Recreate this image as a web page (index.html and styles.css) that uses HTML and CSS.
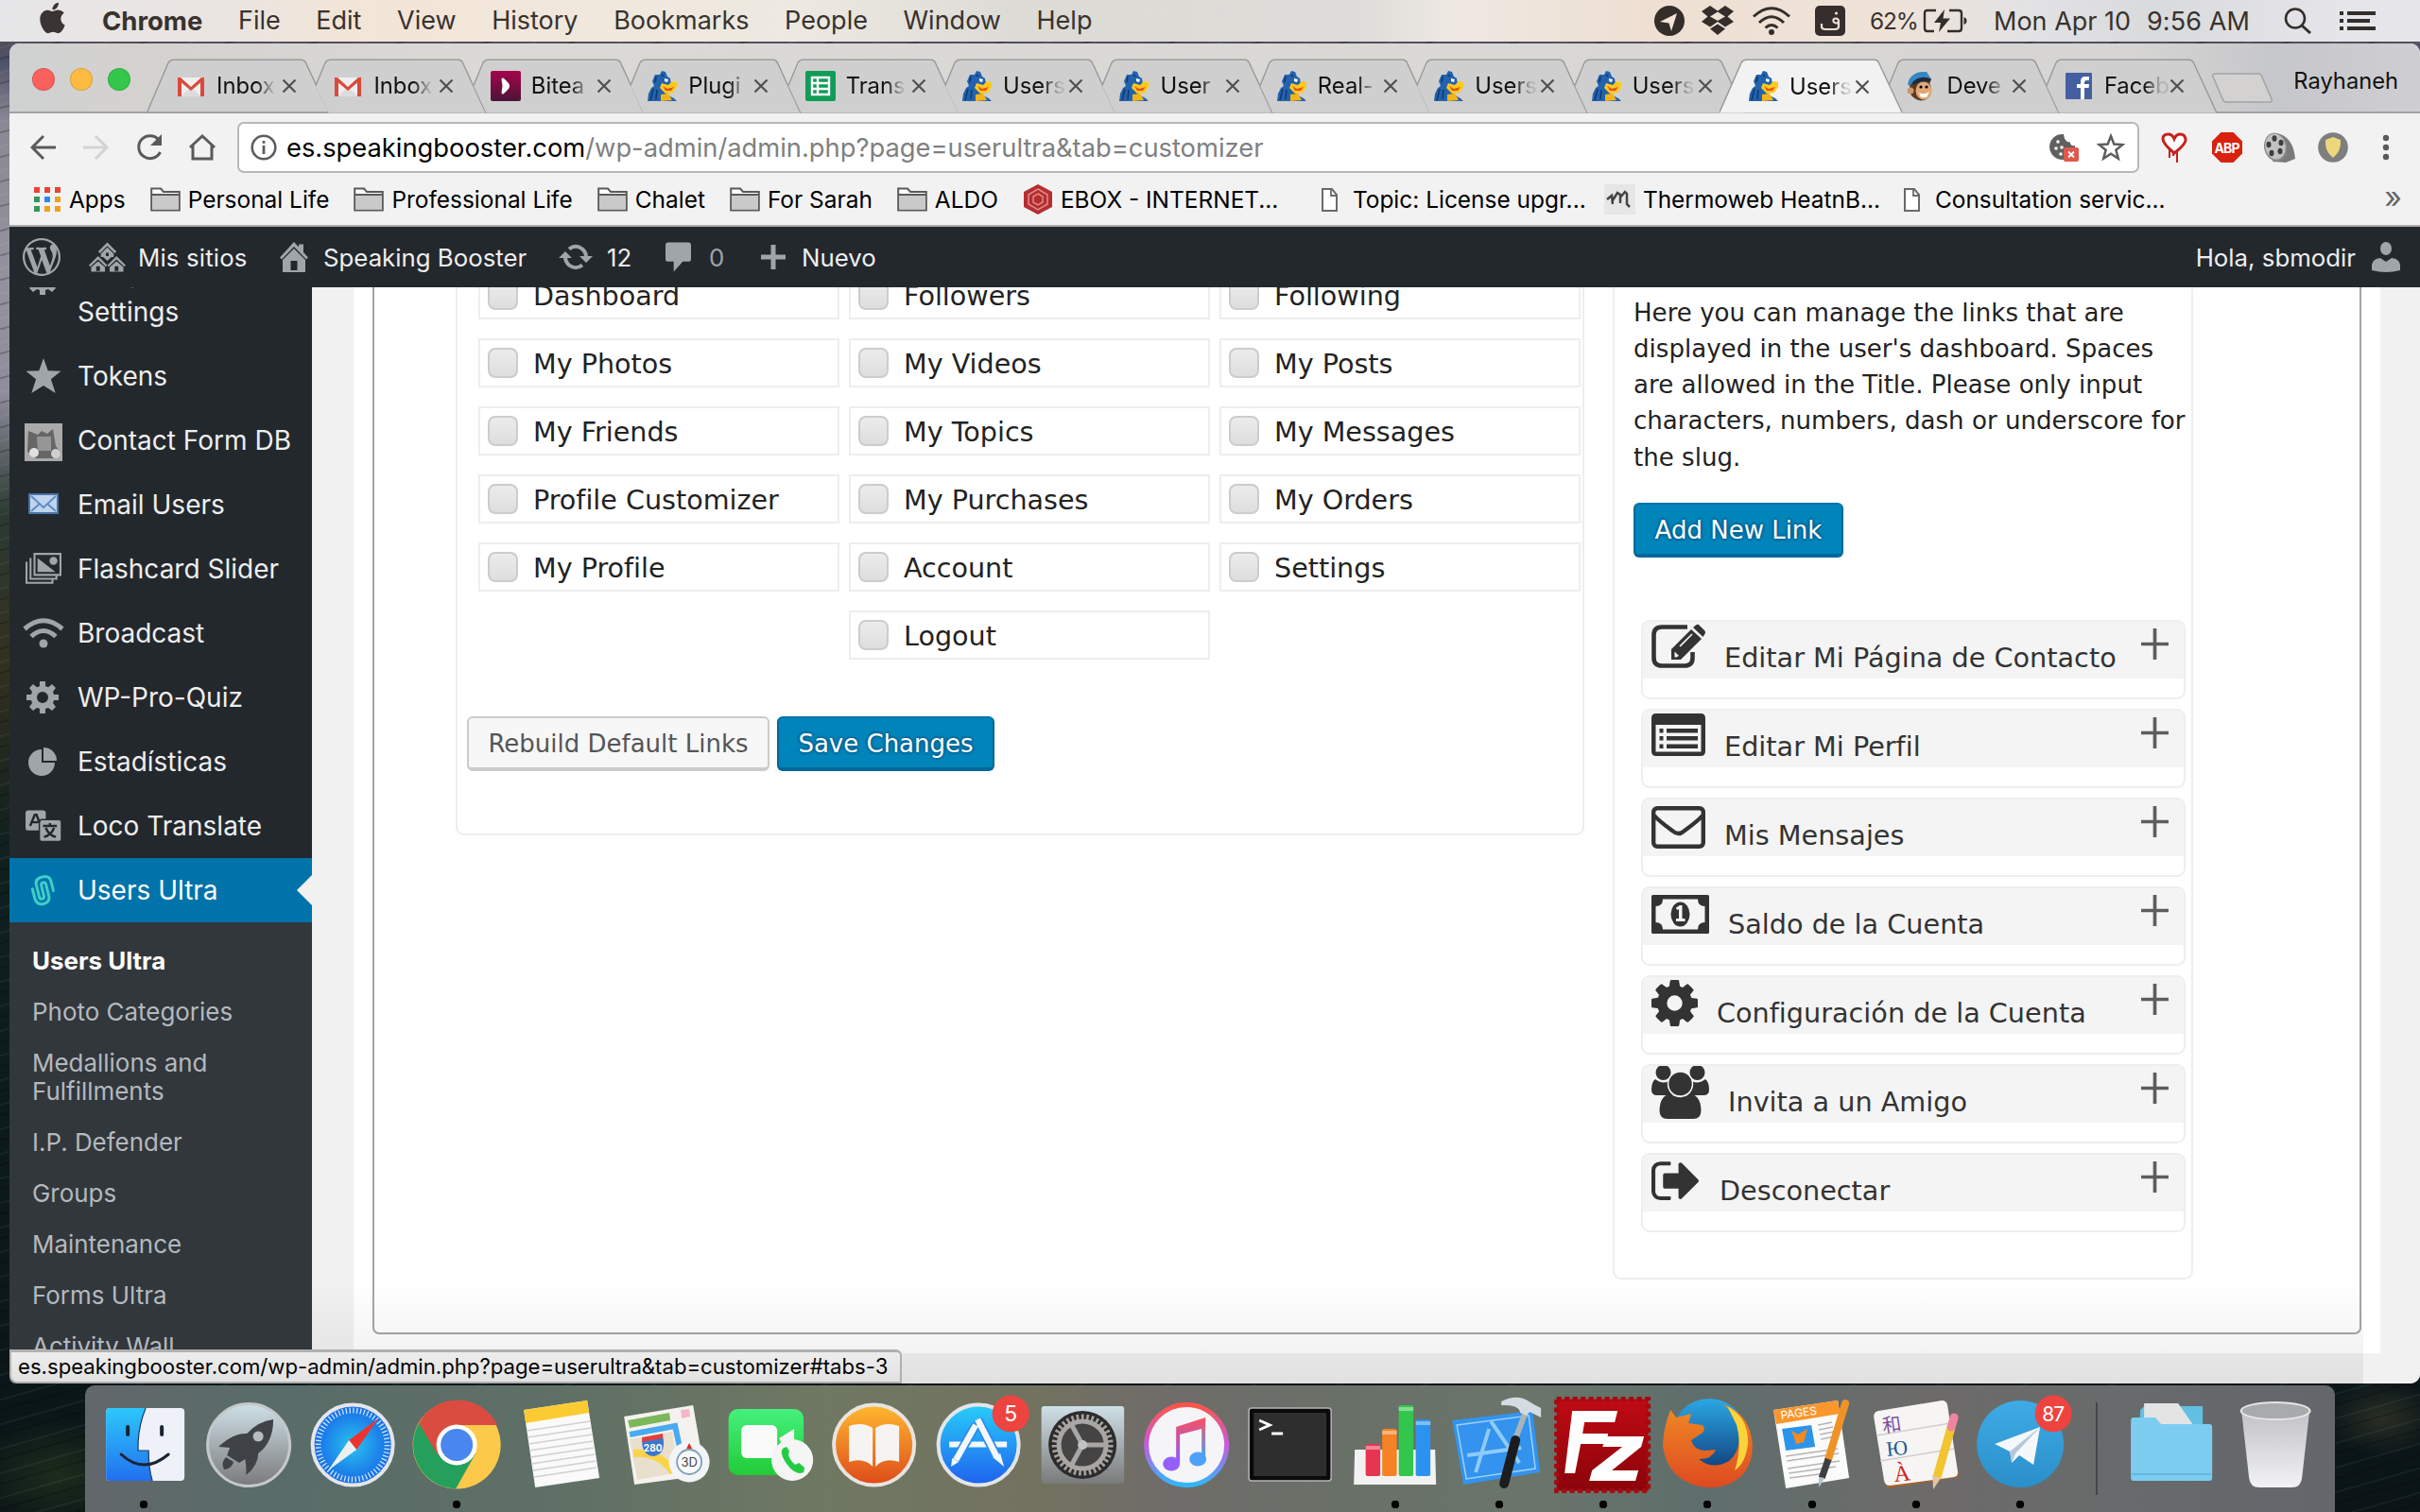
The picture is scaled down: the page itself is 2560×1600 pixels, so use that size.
FILE: index.html
```html
<!DOCTYPE html>
<html lang="es">
<head>
<meta charset="utf-8">
<title>Users Ultra</title>
<link rel="stylesheet" href="styles.css">
</head>
<body>
<svg class="defs" width="0" height="0">
  <defs>
    <linearGradient id="gFinder" x1="0" y1="0" x2="0" y2="1"><stop offset="0" stop-color="#2cc8fb"/><stop offset="1" stop-color="#2270ee"/></linearGradient>
    <linearGradient id="gGrey" x1="0" y1="0" x2="0" y2="1"><stop offset="0" stop-color="#cfe0e8"/><stop offset="1" stop-color="#7a7a7a"/></linearGradient>
    <radialGradient id="gSafari"><stop offset="0" stop-color="#2bc2ee"/><stop offset="1" stop-color="#1668e8"/></radialGradient>
    <linearGradient id="gGreen" x1="0" y1="0" x2="0" y2="1"><stop offset="0" stop-color="#45f07c"/><stop offset="1" stop-color="#20cc36"/></linearGradient>
    <linearGradient id="gBooks" x1="0" y1="0" x2="0" y2="1"><stop offset="0" stop-color="#ffb92f"/><stop offset="1" stop-color="#de4a1a"/></linearGradient>
    <linearGradient id="gStore" x1="0" y1="0" x2="0" y2="1"><stop offset="0" stop-color="#28cdf9"/><stop offset="1" stop-color="#1f62ee"/></linearGradient>
    <linearGradient id="gRing" x1="0" y1="0" x2="0" y2="1"><stop offset="0" stop-color="#ff5548"/><stop offset=".5" stop-color="#c65be0"/><stop offset="1" stop-color="#30b8fb"/></linearGradient>
    <linearGradient id="gNote" x1="0" y1="0" x2="0" y2="1"><stop offset="0" stop-color="#f8525e"/><stop offset="1" stop-color="#8b5cff"/></linearGradient>
    <linearGradient id="gNote2" x1="0" y1="0" x2="0" y2="1"><stop offset="0" stop-color="#f8525e"/><stop offset="1" stop-color="#44a6f8"/></linearGradient>
    <linearGradient id="gFz" x1="0" y1="0" x2="0" y2="1"><stop offset="0" stop-color="#c00a14"/><stop offset="1" stop-color="#8a040a"/></linearGradient>
    <linearGradient id="gFox" x1="0" y1="0" x2="0" y2="1"><stop offset="0" stop-color="#f08a24"/><stop offset="1" stop-color="#dd4a20"/></linearGradient>
    <linearGradient id="gGlobe" x1="0" y1="0" x2="0" y2="1"><stop offset="0" stop-color="#2ba8e4"/><stop offset="1" stop-color="#103a78"/></linearGradient>
    <linearGradient id="gTele" x1="0" y1="0" x2="0" y2="1"><stop offset="0" stop-color="#3eabe6"/><stop offset="1" stop-color="#2a8fc8"/></linearGradient>
    <linearGradient id="gTrash" x1="0" y1="0" x2="0" y2="1"><stop offset="0" stop-color="#c2c2c4"/><stop offset="1" stop-color="#f2f2f4"/></linearGradient>
    <linearGradient id="gBite" x1="0" y1="0" x2="0" y2="1"><stop offset="0" stop-color="#a6054a"/><stop offset="1" stop-color="#4a1438"/></linearGradient>
  </defs>
  <symbol id="tab-first" viewBox="0 0 194 57"><path d="M.5 56.500 L23 4 Q25 .8 28 .8 H164 Q167 .8 168.500 4 L193 56.500Z" fill="#cfcfcf" stroke="#9b9b9b" stroke-width="1.500"/></symbol>
  <symbol id="tab-back" viewBox="0 0 194 57"><path d="M13 28 L26.500 57H193L168 2H26Z" fill="#cfcfcf"/><path d="M13 28 L23 4 Q25 .8 28 .8 H164 Q167 .8 168.500 4 L193 57" fill="none" stroke="#9b9b9b" stroke-width="1.500"/></symbol>
  <symbol id="tab-front" viewBox="0 0 194 57"><path d="M0 57 L23 4 Q25 .8 28 .8 H164 Q167 .8 168.500 4 L193 57Z" fill="#f2f2f2"/><path d="M0 56.200 L23 4 Q25 .8 28 .8 H164 Q167 .8 168.500 4 L193 56.200" fill="none" stroke="#9b9b9b" stroke-width="1.500"/></symbol>
  <symbol id="x" viewBox="0 0 16 16"><path d="M1.500 1.500 14.500 14.500M14.500 1.500 1.500 14.500" stroke="#505050" stroke-width="2.200"/></symbol>
  <symbol id="gmail" viewBox="0 0 32 32"><path d="M2 7H30V27H2Z" fill="#efefef"/><path d="M5 27 16 17 27 27Z" fill="#dcdcdc"/><path d="M2 7H5L16 17 27 7H30V27H26V12.500L16 21 6 12.500V27H2Z" fill="#d94a3d"/></symbol>
  <symbol id="gator" viewBox="0 0 32 32"><path d="M0 32 1 24 4 18 7 16 5 11 8 4 13 4 15 0 19 1 21 6 24 8 25 14 22 17 20 25 28 29 31 32Z" fill="#2262ae"/><path d="M6 19 3 31M9 6 8 12M15 4 17 6M10 20 9 30" stroke="#123a70" stroke-width="1.600"/><path d="M15 13 22 15 26 11 31 12 31 17 27 23 19 24 13 18Z" fill="#ffc91a"/><path d="M14 25 22 24 26 31 14 32Z" fill="#f5b415"/><path d="M16 16 21 19 28 17 25 21 19 21Z" fill="#e2551c"/><path d="M18 8 22 9 21 12 18 11Z" fill="#fff"/></symbol>
  <symbol id="folder" viewBox="0 0 32 26"><path d="M1.200 24.500V1.500H11L14 5H30.800V24.500Z" fill="#fff" stroke="#5a5a5a" stroke-width="2"/><path d="M2 8.500H30V23.500H2Z" fill="#c9c9c9"/><path d="M1 8H31" stroke="#5a5a5a" stroke-width="2"/></symbol>
  <symbol id="doc" viewBox="0 0 17 25"><path d="M1 1H11L16 7V24H1Z" fill="#fff" stroke="#6a6a6a" stroke-width="2"/><path d="M10 1V8H16" fill="none" stroke="#6a6a6a" stroke-width="1.800"/></symbol>
  <symbol id="plus" viewBox="0 0 30 34"><path d="M15 0V34M0 17H30" stroke="#5d5d5d" stroke-width="3.800"/></symbol>
  <symbol id="gear" viewBox="0 -1408 1536 1536"><path transform="scale(1,-1)" d="M1024 640q0 106 -75 181t-181 75t-181 -75t-75 -181t75 -181t181 -75t181 75t75 181zM1536 749v-222q0 -12 -8 -23t-20 -13l-185 -28q-19 -54 -39 -91q35 -50 107 -138q10 -12 10 -25t-9 -23q-27 -37 -99 -108t-94 -71q-12 0 -26 9l-138 108q-44 -23 -91 -38q-16 -136 -29 -186q-7 -28 -36 -28h-222q-14 0 -24.500 8.500t-11.500 21.500l-28 184q-49 16 -90 37l-141 -107q-10 -9 -25 -9q-14 0 -25 11q-126 114 -165 168q-7 10 -7 23q0 12 8 23q15 21 51 66.500t54 70.500q-27 50 -41 99l-183 27q-13 2 -21 12.500t-8 23.500v222q0 12 8 23t19 13l186 28q14 46 39 92q-40 57 -107 138q-10 12 -10 24q0 10 9 23q26 36 98.500 107.500t94.500 71.500q13 0 26 -10l138 -107q44 23 91 38q16 136 29 186q7 28 36 28h222q14 0 24.500 -8.500t11.500 -21.500l28 -184q49 -16 90 -37l142 107q9 9 24 9q13 0 25 -10q129 -119 165 -170q7 -8 7 -22q0 -12 -8 -23q-15 -21 -51 -66.500t-54 -70.500q26 -50 41 -98l183 -28q13 -2 21 -12.500t8 -23.500z"/></symbol>
  <symbol id="cog" viewBox="0 0 34 34"><path fill-rule="evenodd" d="M14 0H20V5L23 6.200 27 3 31 7 28 11 29 14H34V20H29L28 23 31 27 27 31 23 28 20 29V34H14V29L11 28 7 31 3 27 6 23 5 20H0V14H5L6 11 3 7 7 3 11 6.200 14 5ZM17 11A6 6 0 1 0 17 23A6 6 0 1 0 17 11Z"/></symbol>
</svg>

<header class="menubar">
  <svg class="apple" viewBox="2 0 20 24"><path fill="#3a3534" d="M12.152 6.896c-.948 0-2.415-1.078-3.960-1.040-2.040.027-3.910 1.183-4.961 3.014-2.117 3.675-.546 9.103 1.519 12.090 1.013 1.454 2.208 3.090 3.792 3.039 1.520-.065 2.090-.987 3.935-.987 1.831 0 2.350.987 3.960.948 1.637-.026 2.676-1.480 3.676-2.948 1.156-1.688 1.636-3.325 1.662-3.415-.039-.013-3.182-1.221-3.220-4.857-.026-3.040 2.480-4.494 2.597-4.559-1.429-2.090-3.623-2.324-4.390-2.376-2-.156-3.675 1.090-4.610 1.090zM15.530 3.830c.843-1.012 1.400-2.427 1.245-3.830-1.207.052-2.662.805-3.532 1.818-.780.896-1.454 2.338-1.273 3.714 1.338.104 2.715-.688 3.559-1.701"/></svg>
  <nav class="menus"><b>Chrome</b><span>File</span><span>Edit</span><span>View</span><span>History</span><span>Bookmarks</span><span>People</span><span>Window</span><span>Help</span></nav>
  <div class="status-icons">
    <svg width="32" height="32" viewBox="0 0 32 32"><circle cx="16" cy="16" r="16" fill="#332e2a"/><path d="M6 17 24 8 18 27 15.500 18.500Z" fill="#f3e4d6"/></svg>
    <svg class="dropbox" width="34" height="32" viewBox="0 0 34 32"><path fill="#332e2a" d="M9 0 17 5.500 25 0 34 6 27.500 11.500 34 17 25 22.500 17 17 9 22.500 0 17 6.500 11.500 0 6ZM17 6.500 9 11.500 17 16 25 11.500ZM9 24.500 17 19.500 25 24.500 17 31Z"/></svg>
    <svg class="wifi" width="42" height="30" viewBox="0 0 42 30"><g fill="none" stroke="#332e2a" stroke-width="3"><path d="M2 10.500Q21-7 40 10.500M8 17Q21 4.500 34 17M14.500 22.500Q21 16.500 27.500 22.500"/></g><circle cx="21" cy="27" r="3" fill="#332e2a"/></svg>
    <svg class="kbd" width="32" height="32" viewBox="0 0 32 32"><rect width="32" height="32" rx="5" fill="#352e2c"/><path d="M7 19V22Q7 25 11 25H21Q25 25 25 22V17Q25 13.500 22 13.500T19.500 16.500Q19.500 18.500 25 18.500" fill="none" stroke="#efe2d6" stroke-width="2.200"/><circle cx="22.500" cy="8" r="1.600" fill="#efe2d6"/></svg>
    <span class="pct">62%</span>
    <svg class="battery" width="47" height="26" viewBox="0 0 47 26"><path d="M14 2H5Q2 2 2 5V21Q2 24 5 24H12M28 2H38Q41 2 41 5V21Q41 24 38 24H26" fill="none" stroke="#332e2a" stroke-width="2.400"/><path d="M43.500 9Q46.500 10 46.500 13T43.500 17Z" fill="#332e2a"/><path d="M23 1 12 15H19L17 25 29 10.500H21.500Z" fill="#332e2a"/></svg>
    <span class="date">Mon Apr 10</span><span class="time">9:56 AM</span>
    <svg class="spot" width="30" height="28" viewBox="0 0 30 28"><circle cx="12" cy="11.500" r="10" fill="none" stroke="#332e2a" stroke-width="2.600"/><path d="M19 19 28 27" stroke="#332e2a" stroke-width="3"/></svg>
    <svg class="notif" width="38" height="20" viewBox="0 0 38 20"><g fill="#332e2a"><path d="M0 0H4V4H0ZM8 0H38V4H8ZM0 8H4V12H0ZM8 8H32V12H8ZM0 16H4V20H0ZM8 16H38V20H8Z"/></g></svg>
  </div>
</header>

<main class="window">
  <div class="tabstrip">
    <div class="lights"><i class="red"></i><i class="amber"></i><i class="green"></i></div>
    <div class="tabs">
      <div class="tab"><svg class="shape"><use href="#tab-first"/></svg><svg class="fav"><use href="#gmail"/></svg><span>Inbox</span><svg class="x"><use href="#x"/></svg></div>
      <div class="tab"><svg class="shape"><use href="#tab-back"/></svg><svg class="fav"><use href="#gmail"/></svg><span>Inbox</span><svg class="x"><use href="#x"/></svg></div>
      <div class="tab"><svg class="shape"><use href="#tab-back"/></svg><svg class="fav" viewBox="0 0 32 32"><rect width="32" height="32" rx="2" fill="url(#gBite)"/><path d="M13 9 17 13Q20 16 17 19L13 23 14 16Z" fill="#fff" stroke="#fff" stroke-width="3" stroke-linejoin="round"/></svg><span>Bitea</span><svg class="x"><use href="#x"/></svg></div>
      <div class="tab"><svg class="shape"><use href="#tab-back"/></svg><svg class="fav"><use href="#gator"/></svg><span>Plugi</span><svg class="x"><use href="#x"/></svg></div>
      <div class="tab"><svg class="shape"><use href="#tab-back"/></svg><svg class="fav" viewBox="0 0 32 32"><rect width="32" height="32" rx="2" fill="#119c58"/><path d="M7 7H25V25H7ZM7 13H25M7 19H25M13 7V25" fill="none" stroke="#fff" stroke-width="2.400"/></svg><span>Trans</span><svg class="x"><use href="#x"/></svg></div>
      <div class="tab"><svg class="shape"><use href="#tab-back"/></svg><svg class="fav"><use href="#gator"/></svg><span>Users</span><svg class="x"><use href="#x"/></svg></div>
      <div class="tab"><svg class="shape"><use href="#tab-back"/></svg><svg class="fav"><use href="#gator"/></svg><span>User</span><svg class="x"><use href="#x"/></svg></div>
      <div class="tab"><svg class="shape"><use href="#tab-back"/></svg><svg class="fav"><use href="#gator"/></svg><span>Real-</span><svg class="x"><use href="#x"/></svg></div>
      <div class="tab"><svg class="shape"><use href="#tab-back"/></svg><svg class="fav"><use href="#gator"/></svg><span>Users</span><svg class="x"><use href="#x"/></svg></div>
      <div class="tab"><svg class="shape"><use href="#tab-back"/></svg><svg class="fav"><use href="#gator"/></svg><span>Users</span><svg class="x"><use href="#x"/></svg></div>
      <div class="tab active"><svg class="shape"><use href="#tab-front"/></svg><svg class="fav"><use href="#gator"/></svg><span>Users</span><svg class="x"><use href="#x"/></svg></div>
      <div class="tab"><svg class="shape"><use href="#tab-back"/></svg><svg class="fav" viewBox="0 0 32 32"><path d="M6 10Q2 20 6 26 12 33 20 31 28 28 27 18L24 8Z" fill="#5a3a24"/><ellipse cx="19" cy="21" rx="8.500" ry="9.500" fill="#e0a878"/><circle cx="5" cy="21" r="3.500" fill="#d09868"/><path d="M2 14Q5 0 22 1L26 7Q13 5 4 16Z" fill="#3587c4"/><path d="M7 12Q15 4 27 8L26 12Q17 9 8 15Z" fill="#1c2c3c"/><circle cx="16" cy="17" r="1.600"/><circle cx="22" cy="17" r="1.600"/><path d="M14 23Q19 26 25 22L22 28H16Z" fill="#fff"/></svg><span>Deve</span><svg class="x"><use href="#x"/></svg></div>
      <div class="tab"><svg class="shape"><use href="#tab-back"/></svg><svg class="fav" viewBox="0 0 32 32"><rect x="2" y="2" width="28" height="28" rx="1" fill="#4460a0"/><path d="M18 30V18H14V14H18V11Q18 6 23 6H27V10H24.500Q22 10 22 12V14H27L26.500 18H22V30Z" fill="#fff"/></svg><span>Faceb</span><svg class="x"><use href="#x"/></svg></div>
    </div>
    <svg class="newtab" width="66" height="32" viewBox="0 0 66 32"><path d="M5 1H50Q52.500 1 53.500 3.500L64 28Q65 31 62 31H16Q13.500 31 12.500 28.500L2 4Q1 1 5 1Z" fill="#d3d2d1" stroke="#a2a2a2" stroke-width="1.500"/></svg>
    <span class="profile">Rayhaneh</span>
  </div>

  <div class="toolbar">
    <svg class="nav" viewBox="0 0 205 32"><g fill="none" stroke-width="3"><path d="M27 16H3M14 4 2 16 14 28" stroke="#5a5a5a"/><path d="M56 16H80M69 4 81 16 69 28" stroke="#d3d3d3"/><path d="M136 8A12 12 0 1 0 137.500 21" stroke="#5a5a5a"/><path d="M169 16 182 4 195 16M172 14V28H192V14" stroke="#5a5a5a"/></g><path d="M139 2V14H127Z" fill="#5a5a5a"/></svg>
    <div class="url">
      <svg width="28" height="28" viewBox="0 0 28 28"><circle cx="14" cy="14" r="12.300" fill="none" stroke="#5d5d5d" stroke-width="2.600"/><path d="M12.600 12H15.400V21H12.600ZM12.600 7H15.400V9.800H12.600Z" fill="#5d5d5d"/></svg>
      <p>es.speakingbooster.com<span>/wp-admin/admin.php?page=userultra&amp;tab=customizer</span></p>
      <svg class="cookie" width="31" height="30" viewBox="0 0 31 30"><path d="M15 1A13.500 13.500 0 1 0 27 13Q22 14 22 9.500 16 10 15 1Z" fill="#606060"/><g fill="#fff"><circle cx="9" cy="9" r="1.800"/><circle cx="7" cy="16" r="1.800"/><circle cx="13" cy="15" r="1.800"/><circle cx="12" cy="22" r="1.800"/></g><rect x="15" y="15" width="16" height="15" rx="2" fill="#e0584b"/><path d="M20 19.500 26 25.500M26 19.500 20 25.500" stroke="#fff" stroke-width="1.800"/></svg>
      <svg class="star" width="30" height="30" viewBox="0 0 30 30"><path d="M15 3 18.300 11.500 27.500 12 20.400 17.800 22.800 26.800 15 21.800 7.200 26.800 9.600 17.800 2.500 12 11.700 11.500Z" fill="none" stroke="#5d5d5d" stroke-width="2.500"/></svg>
    </div>
    <svg class="ext" viewBox="0 0 260 32"><path d="M14 22Q2 12 2 7T7.500 2Q12 2 14 7 16 2 20.500 2T26 7 14 22Z" fill="#fff" stroke="#c8201c" stroke-width="3"/><path d="M9 17V27M13 22V25M17 20V32" stroke="#c8201c" stroke-width="2"/><path d="M63.500 0H76.500L86 9.500V22.500L76.500 32H63.500L54 22.500V9.500Z" fill="#d8210f"/><text x="70" y="21.500" font-size="14" font-weight="700" text-anchor="middle" fill="#fff" textLength="27">ABP</text><path d="M122 1Q140 4 142 28L132 32 118 31Z" fill="#7a7a7a"/><ellipse cx="121" cy="15.500" rx="12" ry="15" fill="#8c8c8c" transform="rotate(-12 121 15)"/><ellipse cx="121" cy="15" rx="10.500" ry="13.500" fill="#c2c2c2" transform="rotate(-12 121 15)"/><g fill="#3e3e3e"><ellipse cx="120" cy="6.500" rx="2.500" ry="3.200"/><ellipse cx="114" cy="13" rx="2.500" ry="3.200"/><ellipse cx="127" cy="11" rx="2.500" ry="3.200"/><ellipse cx="117" cy="22" rx="2.500" ry="3.200"/><ellipse cx="126" cy="20" rx="2.500" ry="3.200"/></g><circle cx="182" cy="16" r="15.800" fill="#7e7e7e"/><path d="M182 5 190 8Q191 20 182 27 173 20 174 8Z" fill="#ecd77c"/><g fill="#5a5a5a"><circle cx="238" cy="6" r="3.200"/><circle cx="238" cy="16" r="3.200"/><circle cx="238" cy="26" r="3.200"/></g></svg>
  </div>

  <div class="bookmarks">
    <span class="bm apps"><svg width="28" height="26" viewBox="0 0 28 26"><path d="M0 0H6V6H0ZM11 0H17V6H11ZM22 0H28V6H22Z" fill="#ea4335"/><path d="M0 10H6V16H0ZM0 20H6V26H0Z" fill="#34965a"/><path d="M11 10H17V16H11Z" fill="#2a8af0"/><path d="M11 20H17V26H11ZM22 10H28V16H22ZM22 20H28V26H22Z" fill="#f0a020"/></svg>Apps</span>
    <span class="bm"><svg class="fo"><use href="#folder"/></svg>Personal Life</span>
    <span class="bm"><svg class="fo"><use href="#folder"/></svg>Professional Life</span>
    <span class="bm"><svg class="fo"><use href="#folder"/></svg>Chalet</span>
    <span class="bm"><svg class="fo"><use href="#folder"/></svg>For Sarah</span>
    <span class="bm"><svg class="fo"><use href="#folder"/></svg>ALDO</span>
    <span class="bm ebox"><svg width="32" height="32" viewBox="0 0 32 32"><path d="M16 0 31 8V24L16 32 1 24V8Z" fill="#b52e30"/><path d="M16 5 26 11V21L16 27 6 21V11ZM16 10 21 13V19L16 22 11 19V13Z" fill="none" stroke="#e08a88" stroke-width="1.500"/></svg>EBOX - INTERNET...</span>
    <span class="bm topic"><svg class="dc"><use href="#doc"/></svg>Topic: License upgr...</span>
    <span class="bm thermo"><svg width="33" height="32" viewBox="0 0 33 32"><rect width="33" height="32" fill="#e6e6e6"/><path d="M3 16 8 12 9 21M9 17 14 9 17 11V20M17 14 22 8 24 10 24 21 27 24" fill="none" stroke="#444" stroke-width="2.500"/></svg>Thermoweb HeatnB...</span>
    <span class="bm consult"><svg class="dc"><use href="#doc"/></svg>Consultation servic...</span>
    <span class="more">»</span>
  </div>

  <div class="adminbar">
    <svg class="wp" viewBox="0 0 20 20"><path d="M20 10c0-5.510-4.490-10-10-10C4.480 0 0 4.490 0 10c0 5.520 4.480 10 10 10 5.510 0 10-4.480 10-10zM7.780 15.370L4.370 6.220c.550-.020 1.170-.080 1.170-.080.500-.060.440-1.130-.060-1.110 0 0-1.450.110-2.370.110-.180 0-.370 0-.580-.010C4.120 2.690 6.870 1.110 10 1.110c2.330 0 4.450.870 6.050 2.340-.680-.110-1.650.390-1.650 1.580 0 .740.450 1.360.900 2.100.350.610.550 1.360.550 2.460 0 1.490-1.400 5-1.400 5l-3.030-8.370c.540-.020.820-.170.820-.170.500-.050.440-1.250-.060-1.220 0 0-1.440.120-2.380.120-.870 0-2.330-.120-2.330-.120-.500-.030-.560 1.200-.060 1.220l.920.080 1.260 3.410zM17.410 10c.240-.640.740-1.870.430-4.250.700 1.290 1.050 2.710 1.050 4.250 0 3.290-1.730 6.240-4.400 7.780.970-2.590 1.940-5.200 2.920-7.780zM6.100 18.090C3.120 16.650 1.110 13.530 1.110 10c0-1.300.230-2.480.720-3.590C3.250 10.300 4.670 14.200 6.100 18.090zm4.030-6.630l2.580 6.980c-.860.290-1.760.450-2.710.450-.790 0-1.570-.110-2.290-.330.810-2.380 1.620-4.740 2.420-7.100z"/></svg>
    <svg class="sites" viewBox="0 0 40 32"><path d="M20 0 30 10 28 12 20 4 12 12 10 10Z"/><path fill-rule="evenodd" d="M20 5.500 27 12.500V16H24.500L20 20 15.500 16H13V12.500ZM18.500 11.500V15H21.500V11.500Z"/><path d="M10 15 20 25 18.500 26.500 10 18.500 1.500 26.500 0 25ZM30 15 40 25 38.500 26.500 30 18.500 21.500 26.500 20 25Z"/><path fill-rule="evenodd" d="M2.500 27 10 20.500 17.500 27V32H2.500ZM8 26V31H12V26ZM22.500 27 30 20.500 37.500 27V32H22.500ZM28 26V31H32V26Z"/></svg>
    <span class="t1">Mis sitios</span>
    <svg class="house" viewBox="0 0 30 32"><path d="M15 0 20 5.500V2.500H25V11L30 16.500 28 18.500 15 5 2 18.500 0 16.500Z"/><path fill-rule="evenodd" d="M3 19 15 7 27 19V32H3ZM11.500 20V30H18.500V20Z"/></svg>
    <span class="t2">Speaking Booster</span>
    <svg class="sync" viewBox="0 0 36 28"><g fill="none" stroke="#a0a5aa" stroke-width="4"><path d="M11 5.500Q18 0 25 5.500 29 9 29 14M25 22.500Q18 28 11 22.500 7 19 7 14"/></g><path d="M22 13H36L29 20ZM0 15H14L7 8Z"/></svg>
    <span class="t3">12</span>
    <svg class="comment" viewBox="0 0 28 32"><path d="M3 0H25Q28 0 28 3V18Q28 21 25 21H19L9 32V21H3Q0 21 0 18V3Q0 0 3 0Z"/></svg>
    <span class="t4">0</span>
    <svg class="add" viewBox="0 0 26 26"><path d="M10.500 0H15.500V10.500H26V15.500H15.500V26H10.500V15.500H0V10.500H10.500Z"/></svg>
    <span class="t5">Nuevo</span>
    <span class="hola">Hola, sbmodir</span>
    <svg class="user" viewBox="0 0 30 32"><ellipse cx="15" cy="7" rx="6" ry="7"/><path d="M0 30V24Q1 18 9 17L15 21 21 17Q29 18 30 24V30Q15 34 0 30Z"/></svg>
  </div>

  <div class="page">
    <aside class="sidebar">
      <div class="item two"><svg class="top" viewBox="0 0 34 34"><use href="#cog"/></svg><span>Private Content<br>Settings</span></div>
      <div class="item"><svg viewBox="0 0 36 36"><path d="M18 0 22.500 12.500 35.500 13 25.500 21 30 35 18 27.500 6 35 10.500 21 .5 13 13.500 12.500Z"/></svg><span>Tokens</span></div>
      <div class="item"><svg class="db" viewBox="0 0 40 40"><path d="M0 0H40V40H0Z" fill="#aaa"/><path d="M4 8 14 12 18 8 24 11 30 6 33 24 38 30 30 37 12 37 3 30Z" fill="#666"/><path d="M13 14H28V29H14Z" fill="#969696"/><circle cx="10" cy="31" r="5" fill="#e0e0e0"/><circle cx="33" cy="32" r="5" fill="#d0d0d0"/></svg><span>Contact Form DB</span></div>
      <div class="item"><svg class="mail" viewBox="0 0 32 24"><rect width="32" height="22" fill="#4673a8"/><rect x="2" y="2" width="28" height="18" fill="#bfd5ee"/><path d="M3 3 16 15 29 3M3 19 12 11M29 19 20 11" fill="none" stroke="#5f8cc4" stroke-width="2"/></svg><span>Email Users</span></div>
      <div class="item"><svg viewBox="0 0 36 32"><g fill="none" stroke="#a0a5aa" stroke-width="2"><path d="M9 1H35V22H9ZM5 5V26H31V23M1 9V30H27V27"/></g><path d="M12 5 30 19H12Z"/><circle cx="28" cy="8" r="4"/></svg><span>Flashcard Slider</span></div>
      <div class="item"><svg class="wide" viewBox="0 0 44 32"><g fill="none" stroke="#a0a5aa" stroke-width="5"><path d="M2 11.500Q22-6 42 11.500M9 19.500Q22 7.500 35 19.500"/></g><circle cx="22" cy="27" r="4.500"/></svg><span>Broadcast</span></div>
      <div class="item"><svg class="top" viewBox="0 0 34 34"><use href="#cog"/></svg><span>WP-Pro-Quiz</span></div>
      <div class="item"><svg class="pie" viewBox="0 0 30 30"><path d="M14 2V16H28A14 14 0 1 1 14 2Z"/><path d="M16 0A14 14 0 0 1 30 14H16Z"/></svg><span>Estadísticas</span></div>
      <div class="item"><svg viewBox="0 0 39 34"><rect width="22" height="22" rx="3"/><rect x="15" y="10" width="24" height="24" rx="3" stroke="#23282d" stroke-width="1.500"/><path d="M5 17 10 5H12L15 13M7 13H14" fill="none" stroke="#23282d" stroke-width="2.500"/><path d="M19 17H34M26.500 14V17M22 19Q25 27 33 29M31 19Q28 27 20 29" fill="none" stroke="#23282d" stroke-width="2.500"/></svg><span>Loco Translate</span></div>
      <div class="item current"><svg viewBox="0 0 32 34"><g fill="none" stroke="#3ecfc6" stroke-width="3" stroke-linecap="round" transform="rotate(-14 16 17)"><path d="M5 13V23Q5 31 12.500 31T20 24V12Q20 9 17.500 9T15 12V23Q15 25.500 12.500 25.500T10 23V10Q10 3 18 3T26 10V20"/></g></svg><span>Users Ultra</span></div>
      <ul class="sub"><li class="on">Users Ultra</li><li>Photo Categories</li><li>Medallions and<br>Fulfillments</li><li>I.P. Defender</li><li>Groups</li><li>Maintenance</li><li>Forms Ultra</li><li>Activity Wall</li></ul>
    </aside>
    <section class="main">
      <div class="sheet"><div class="frame">
        <div class="panel links">
          <div class="grid">
            <label><i></i>Dashboard</label><label><i></i>Followers</label><label><i></i>Following</label>
            <label><i></i>My Photos</label><label><i></i>My Videos</label><label><i></i>My Posts</label>
            <label><i></i>My Friends</label><label><i></i>My Topics</label><label><i></i>My Messages</label>
            <label><i></i>Profile Customizer</label><label><i></i>My Purchases</label><label><i></i>My Orders</label>
            <label><i></i>My Profile</label><label><i></i>Account</label><label><i></i>Settings</label>
            <label class="mid"><i></i>Logout</label>
          </div>
          <div class="actions"><button class="btn">Rebuild Default Links</button><button class="btn primary save">Save Changes</button></div>
        </div>
        <div class="panel side">
          <p>Here you can manage the links that are<br>displayed in the user's dashboard. Spaces<br>are allowed in the Title. Please only input<br>characters, numbers, dash or underscore for<br>the slug.</p>
          <button class="btn primary new">Add New Link</button>
          <div class="widgets">
            <div class="widget"><h3><svg width="57" viewBox="0 0 57 59"><path d="M38 5.500H11Q2.500 5.500 2.500 14V38Q2.500 46.500 11 46.500H35Q43.500 46.500 43.500 38V32" fill="none" stroke="#333" stroke-width="4.600"/><path d="M21 40V29L42 8 53 18 31 40ZM44 6 47 3.500Q49 2 51 4L56 9Q58 11 56 13.500L54.500 16Z"/><path d="M24.500 31.500 29 36 26.500 37.500H24.500V34Z" fill="#f4f4f4"/><path d="M30 26 43 13" stroke="#f4f4f4" stroke-width="1.600"/></svg><span>Editar Mi Página de Contacto</span><svg class="plus"><use href="#plus"/></svg></h3></div>
            <div class="widget"><h3><svg width="57" viewBox="0 0 57 59"><path fill-rule="evenodd" d="M5 3H52Q57 3 57 8V43Q57 48 52 48H5Q0 48 0 43V8Q0 3 5 3ZM4.500 15V43.500H52.500V15Z"/><path d="M8.500 19H12.500V23.500H8.500ZM16 19H49V23.500H16ZM8.500 27H12.500V31.500H8.500ZM16 27H49V31.500H16ZM8.500 35.500H12.500V40H8.500ZM16 35.500H49V40H16Z"/></svg><span>Editar Mi Perfil</span><svg class="plus"><use href="#plus"/></svg></h3></div>
            <div class="widget"><h3><svg width="57" viewBox="0 0 57 59"><g fill="none" stroke="#333" stroke-width="4.400"><rect x="2.200" y="9.200" width="52.600" height="40.600" rx="4"/><path d="M3 17Q7 22 22 33 28.500 39 35 33 50 22 54 17"/></g></svg><span>Mis Mensajes</span><svg class="plus"><use href="#plus"/></svg></h3></div>
            <div class="widget"><h3><svg width="61" viewBox="0 0 61 59"><path fill-rule="evenodd" d="M1.500 7H59.500Q61 7 61 8.500V46.500Q61 48 59.500 48H1.500Q0 48 0 46.500V8.500Q0 7 1.500 7ZM12 11.500Q12 19 4.500 19V36Q12 36 12 43.500H49Q49 36 56.500 36V19Q49 19 49 11.500Z"/><ellipse cx="30.500" cy="27.500" rx="10" ry="13"/><path d="M26 20.500 30 18H32.500V32H35.500V35H26V32H29V22L27 23Z" fill="#f4f4f4"/></svg><span>Saldo de la Cuenta</span><svg class="plus"><use href="#plus"/></svg></h3></div>
            <div class="widget"><h3><svg width="49" viewBox="0 0 49 59"><use href="#gear" y="3" width="49" height="49"/></svg><span>Configuración de la Cuenta</span><svg class="plus"><use href="#plus"/></svg></h3></div>
            <div class="widget"><h3><svg width="61" viewBox="0 0 61 59"><circle cx="12.500" cy="7" r="8"/><circle cx="48.500" cy="7" r="8"/><path d="M4 14Q12 20 18 16 16 26 23 31H6Q0 31 0 25 0 17 4 14ZM57 14Q49 20 43 16 45 26 38 31H55Q61 31 61 25 61 17 57 14Z"/><circle cx="30.500" cy="19" r="13" stroke="#f4f4f4" stroke-width="1.500"/><path d="M20 29.500Q30.500 37 41 29.500 52 31 52.500 47 52.500 56 44 56H17Q8.500 56 8.500 47 9 31 20 29.500Z"/></svg><span>Invita a un Amigo</span><svg class="plus"><use href="#plus"/></svg></h3></div>
            <div class="widget"><h3><svg width="52" viewBox="0 0 52 59"><path transform="translate(0 48) scale(.0319 -.0319)" d="M640 96q0 -4 1 -20t0.500 -26.500t-3 -23.500t-10 -19.500t-20.500 -6.500h-320q-119 0 -203.500 84.500t-84.500 203.500v704q0 119 84.500 203.500t203.500 84.500h320q13 0 22.500 -9.500t9.500 -22.500q0 -4 1 -20t0.500 -26.500t-3 -23.500t-10 -19.500t-20.500 -6.500h-320q-66 0 -113 -47t-47 -113v-704q0 -66 47 -113t113 -47h288h11h13t11.500 -1t11.500 -3t8 -5.500t7 -9t2 -13.500zM1568 640q0 -26 -19 -45l-544 -544q-19 -19 -45 -19t-45 19t-19 45v288h-448q-26 0 -45 19t-19 45v384q0 26 19 45t45 19h448v288q0 26 19 45t45 19t45 -19l544 -544q19 -19 19 -45z"/></svg><span>Desconectar</span><svg class="plus"><use href="#plus"/></svg></h3></div>
          </div>
        </div>
      </div></div>
    </section>
    <div class="linkstatus">es.speakingbooster.com/wp-admin/admin.php?page=userultra&amp;tab=customizer#tabs-3</div>
  </div>
</main>

<footer class="dock">
  <svg class="app run" viewBox="0 0 110 134"><rect x="15" y="24" width="83" height="77" rx="4" fill="#eef1f8"/><path d="M19 24H57Q48 46 49 69H60Q60 88 64 101H19Q15 101 15 97V28Q15 24 19 24Z" fill="url(#gFinder)"/><path d="M57 24Q48 46 49 69H60Q60 88 64 101" fill="none" stroke="#1f3a66" stroke-width="1.200"/><path d="M38 44V52M74 44V52" stroke="#1a2333" stroke-width="4" stroke-linecap="round"/><path d="M31 73Q55 95 81 73" fill="none" stroke="#1a2333" stroke-width="3" stroke-linecap="round"/></svg>
  <svg class="app" viewBox="0 0 110 134"><circle cx="56" cy="63" r="43.500" fill="url(#gGrey)" stroke="#c4c8ca" stroke-width="3"/><path d="M82 36Q66 38 54 51 40 50 24 65L36 66 33 74 46 82 52 78Q54 86 53 95 66 85 66 72 82 60 82 36ZM32 76Q26 82 30 89 38 88 40 81Z" fill="#3f4347"/><circle cx="66" cy="54" r="5.500" fill="#b4bcc0"/></svg>
  <svg class="app" viewBox="0 0 110 134"><circle cx="55" cy="63" r="42.500" fill="url(#gSafari)" stroke="#e4e6ea" stroke-width="4"/><circle cx="55" cy="63" r="36.500" fill="none" stroke="#cfe8fb" stroke-width="6" stroke-dasharray="1.300 2.520"/><path d="M82 35 59 68 51 58Z" fill="#f0322c"/><path d="M29 90 51 58 59 68Z" fill="#eceff2"/></svg>
  <svg class="app run" viewBox="0 0 110 134"><circle cx="55" cy="63" r="46.500" fill="#fdc94b"/><path d="M55 63 15 40A46.500 46.500 0 0 0 54 109.500L75 72Z" fill="#24a05c"/><path d="M15 40A46.500 46.500 0 0 1 98 42H55L35 74Z" fill="#db4c40"/><circle cx="55" cy="63" r="21.500" fill="#fff"/><circle cx="55" cy="63" r="17" fill="#4a86ef"/></svg>
  <svg class="app" viewBox="0 0 110 134"><path d="M16 26 83 16 96 98 28 108Z" fill="#fafafa"/><path d="M16 26 83 16 85 29 18 40Z" fill="#fbcb33"/><path d="M19 48 86 38M20 55 87 45M21 62 88 52M22 69 89 59M23 76 90 66M24 83 91 73M26 90 92 80M27 97 93 87" stroke="#d0d0d0" stroke-width="1.500"/></svg>
  <svg class="app" viewBox="0 0 110 134"><path d="M12 33 85 21 98 95 23 105Z" fill="#f4f2ee"/><path d="M16 37 60 29 61 37 18 45Z" fill="#7cb85a"/><path d="M72 26 81 25 82 33 73 35Z" fill="#f5b6c8"/><path d="M18 57 63 49 70 92 26 100Z" fill="#e8dfcd"/><path d="M18 52 66 43 74 80" fill="none" stroke="#48aaf0" stroke-width="6"/><path d="M22 72Q50 70 64 92" fill="none" stroke="#fbd348" stroke-width="8"/><path d="M31 58 53 54Q57 72 44 75 31 75 31 58Z" fill="#3b78cc"/><path d="M31 55 53 51V56L31 60Z" fill="#e04040"/><text x="42.500" y="70" font-size="10" font-weight="700" fill="#fff" text-anchor="middle">280</text><circle cx="81" cy="81" r="21.500" fill="#f2f4f6"/><circle cx="81" cy="81" r="13" fill="#fafafa" stroke="#7aa0b8" stroke-width="1.800"/><path d="M81 61 84 67H78Z" fill="#e02a20"/><text x="81" y="85.500" font-size="13" fill="#444" text-anchor="middle">3D</text></svg>
  <svg class="app" viewBox="0 0 110 134"><rect x="11.500" y="25" width="79.500" height="70" rx="10" fill="url(#gGreen)"/><rect x="25" y="42" width="38" height="35" rx="6" fill="#fafafa"/><path d="M65 56 81 46V70H72Z" fill="#f4f4f4"/><circle cx="79" cy="79" r="22" fill="#f4f5f4"/><path d="M70 66Q64 70 73 83T91 92L92 87 86 82 82 84Q75 78 75 72L76 70 73 65Z" fill="#24cc44"/></svg>
  <svg class="app" viewBox="0 0 110 134"><circle cx="55.500" cy="63" r="42.500" fill="url(#gBooks)" stroke="#e8e4e0" stroke-width="4"/><path d="M29 43Q43 38 54 45V86Q45 76 29 81ZM82 43Q68 38 57 45V86Q66 76 82 81Z" fill="#f6f4f2"/></svg>
  <svg class="app" viewBox="0 0 110 134"><circle cx="56" cy="63" r="42.500" fill="url(#gStore)" stroke="#e2e6ea" stroke-width="4"/><path d="M25 62.500H86" stroke="#f4f8fc" stroke-width="6"/><path d="M53 42 32 79M55 36 75 75" stroke="#2a8cf2" stroke-width="10"/><path d="M53 42 32 79M55 36 75 75" stroke="#f4f8fc" stroke-width="6.500"/><path d="M28 77 35 81 27 86ZM71 76 79 72 83 86Z" fill="#f4f8fc"/><circle cx="90" cy="30" r="19.500" fill="#ee4440"/><text x="90" y="38" font-size="23" fill="#fff" text-anchor="middle">5</text></svg>
  <svg class="app" viewBox="0 0 110 134"><rect x="11.500" y="22" width="87.500" height="82" rx="3" fill="url(#gGrey)"/><circle cx="55" cy="63" r="36" fill="#2c2c2c"/><circle cx="55" cy="63" r="29" fill="none" stroke="#a4a19e" stroke-width="7" stroke-dasharray="2.600 2.600"/><circle cx="55" cy="63" r="25" fill="#444" stroke="#a9a6a3" stroke-width="5"/><path d="M55 63 43 41M55 63H80M55 63 43 85" stroke="#a9a6a3" stroke-width="5"/><circle cx="55" cy="63" r="5" fill="#c4c2c0"/></svg>
  <svg class="app" viewBox="0 0 110 134"><circle cx="55" cy="63" r="42.500" fill="#f5f5f8" stroke="url(#gRing)" stroke-width="5"/><path d="M44 44 75 34V45L48 52V82H44Z" fill="url(#gNote)"/><path d="M75 34V77H71V46Z" fill="url(#gNote2)"/><ellipse cx="39" cy="83" rx="9" ry="7.500" fill="#9560fa"/><ellipse cx="67" cy="78" rx="9" ry="7.500" fill="#4da2f8"/></svg>
  <svg class="app" viewBox="0 0 110 134"><rect x="11" y="24" width="87" height="77" rx="3" fill="#0a0a0a" stroke="#b5b5b5" stroke-width="1.500"/><rect x="16" y="29" width="77" height="67" fill="#2e2e2e"/><path d="M22 37 33 42 22 47M35 51H47" fill="none" stroke="#fff" stroke-width="3"/></svg>
  <svg class="app run" viewBox="0 0 110 134"><path d="M12 68H97L98 105H11Z" fill="#f2f2f2"/><rect x="23.500" y="62" width="15.500" height="34" rx="2" fill="#e63550"/><rect x="41" y="46" width="15.500" height="50" rx="2" fill="#f58224"/><rect x="58.500" y="21" width="15.500" height="75" rx="2" fill="#33c64c"/><rect x="76.500" y="36" width="15.500" height="60" rx="2" fill="#2c92f0"/><path d="M23.500 64H39V68H23.500ZM41 48H56.500V52H41ZM58.500 23H74V27H58.500ZM76.500 38H92V42H76.500Z" fill="#fff" opacity=".4"/></svg>
  <svg class="app run" viewBox="0 0 110 134"><path d="M5 37 90 27 98 92 17 105Z" fill="#3393ee"/><path d="M10 42 86 32 93 88 20 99Z" fill="none" stroke="#9dd2fb" stroke-width="1.500"/><path d="M21 74 78 66M44 46 30 92M46 38 76 82" stroke="#8fcbf9" stroke-width="4" fill="none"/><path d="M82 30 70 62" stroke="#a9b4ba" stroke-width="6"/><path d="M57 17Q74 8 88 18L93 21 99 24V34L93 31 87 28 84 32 77 29Q76 20 57 21Z" fill="#d3dce1"/><path d="M72 58 60 104" stroke="#1c1c1e" stroke-width="10" stroke-linecap="round"/></svg>
  <svg class="app run" viewBox="0 0 110 134"><rect x="5.500" y="14.500" width="97" height="97" fill="url(#gFz)" stroke="#a50a10" stroke-width="5" stroke-dasharray="5 3.500"/><path d="M22 27H70L67 39H35L33 51H60L58 62H31L25 93H14Z" fill="#fff"/><path d="M58 54H98L95 65 64 90H92L89 101H40L43 90 75 65H54Z" fill="#fff"/></svg>
  <svg class="app run" viewBox="0 0 110 134"><circle cx="57" cy="54" r="40" fill="url(#gGlobe)"/><path d="M16 26 22 34 38 30 35 40 49 42Q54 44 50 50L38 58Q40 68 52 69L64 68Q60 78 46 78 60 90 78 80 92 68 88 44 80 24 70 20 92 26 100 48 108 76 92 95 74 112 46 107 12 98 8 64 8 46 16 26Z" fill="url(#gFox)"/><path d="M76 22Q98 34 98 60 96 82 84 90 92 64 86 42Z" fill="#fbd33a"/></svg>
  <svg class="app run" viewBox="0 0 110 134"><path d="M14 26 82 16 94 98 27 109Z" fill="#fbfbfb"/><path d="M14 26 82 16 84 30 17 41Z" fill="#f9962c"/><text x="22" y="36" font-size="12" fill="#fff" transform="rotate(-8 22 36)">PAGES</text><path d="M23 46 54 42 58 65 27 69Z" fill="#2c94ea"/><path d="M33 48 40 52 50 46 46 60 38 62Z" fill="#f58a20"/><path d="M61 42 76 39M62 47 77 44M63 52 78 49M64 57 79 54M27 75 82 67M28 80 83 72M29 88 84 80M30 93 80 86M31 98 70 93" stroke="#b5b5b5" stroke-width="1.500"/><path d="M90 19 72 78" stroke="#ef9328" stroke-width="8" stroke-linecap="round"/><path d="M72 78 65 98" stroke="#3e3e40" stroke-width="7"/><path d="M62 97 68 98 62 108Z" fill="#b4c2cc"/></svg>
  <svg class="app run" viewBox="0 0 110 134"><path d="M12 32 86 19 100 97 24 109Z" fill="#a8612c"/><path d="M15 27 82 16Q87 16 88 21L99 92Q99 96 95 97L27 106Q22 106 21 101L10 33Q10 28 15 27Z" fill="#f6f5f4"/><path d="M13 53 91 40M17 80 95 67" stroke="#d0cfcd" stroke-width="1.500"/><text x="20" y="50" font-size="20" fill="#7b4fa0" transform="rotate(-8 20 50)">和</text><text class="serif" x="24" y="75" font-size="22" fill="#1c5c94" transform="rotate(-6 24 75)">Ю</text><text class="serif" x="32" y="102" font-size="24" fill="#d0221c" transform="rotate(-6 32 102)">À</text><path d="M92 44 77 97" stroke="#f2c431" stroke-width="9"/><path d="M95 34 92 44" stroke="#ee86a0" stroke-width="9" stroke-linecap="round"/><path d="M72 95 81 98 73 110Z" fill="#e6c49c"/></svg>
  <svg class="app run" viewBox="0 0 110 134"><circle cx="55" cy="62" r="46" fill="url(#gTele)"/><path d="M28 62 76 44 69 84 54 74 46 82 44 70Z" fill="#f4f8fb"/><path d="M44 70 76 44 50 72 46 82Z" fill="#b4c8d8"/><circle cx="90" cy="30" r="19.500" fill="#ee4440"/><text x="90" y="37.500" font-size="21" fill="#fff" text-anchor="middle" textLength="24">87</text></svg>
  <i class="divider"></i>
  <svg class="app" viewBox="0 0 110 134"><path d="M22 26 26 22H88V60H20Z" fill="#62bfe4"/><path d="M26 19H62L78 42H26Z" fill="#e4e4e4"/><path d="M12 37Q12 34 15 34H38L44 41H95Q98 41 98 44V98Q98 101 95 101H15Q12 101 12 98Z" fill="#7dcdf1"/><path d="M13 94H97" stroke="#62b8de" stroke-width="2"/></svg>
  <svg class="app" viewBox="0 0 110 134"><path d="M19 27 27 98Q28 108 38 108H72Q82 108 83 98L91 27Z" fill="url(#gTrash)"/><ellipse cx="55" cy="27" rx="36.500" ry="9" fill="#a8aaac" stroke="#e6e6e8" stroke-width="2"/></svg>
</footer>
</body>
</html>
```
FILE: styles.css
```css
* { box-sizing: border-box; }
body {
  margin: 0; width: 2560px; height: 1600px; overflow: hidden;
  display: flex; flex-direction: column;
  font-family: Inter, "Liberation Sans", "Noto Sans CJK SC", sans-serif;
  background:
    repeating-linear-gradient(164deg, transparent 0 9px, #0003 9px 11px, transparent 11px 23px, #ffffff0c 23px 25px),
    radial-gradient(ellipse 90px 60px at 60px 1560px, #1d2c1c, transparent),
    radial-gradient(ellipse 60px 40px at 2520px 1500px, #2a2f24, transparent),
    linear-gradient(#5c4a48 0, #4d5166 4%, #8a8894 8%, #93929c 18%, #8f8d9c 26%, #2b3a33 34%, #33301f 44%, #10201f 56%, #0c191d 76%, #0b1517 100%);
}
svg { display: block; flex: none; }
.defs { position: absolute; }
text { font-family: Inter, "Noto Sans CJK SC", sans-serif; }
.serif { font-family: "Liberation Serif", serif; }
button { font-family: inherit; margin: 0; }

/* macOS menu bar */
.menubar {
  flex: none; height: 44px; display: flex; align-items: center; color: #38322e; font-size: 27px;
  background: linear-gradient(90deg, #e6e5e7 0, #ebe5e0 10%, #f3e5d7 15%, #f0e8dc 25%, #ede9e1 33%, #dcdbd6 42%, #dddcd8 56%, #eee8e2 60%, #eedfd2 68%, #efe3d8 78%, #e2e2e4 84%, #d9dadc 89%, #e6e6ea 97%);
}
.apple { width: 27px; height: 34px; margin: -6px 39px 0 42px; }
.menus { display: flex; gap: 37.600px; }
.menus b { font-size: 27.500px; }
.status-icons { display: flex; align-items: center; margin-left: auto; padding-right: 47px; white-space: nowrap; }
.dropbox { margin-left: 18px; }
.wifi { margin-left: 19px; }
.kbd { margin-left: 25px; }
.pct { margin-left: 26px; width: 51px; font-size: 24.500px; letter-spacing: -1.200px; }
.battery { margin-left: 5px; }
.date { margin-left: 28px; width: 162px; letter-spacing: 0; }
.time { width: 110px; letter-spacing: .1px; }
.spot { margin-left: 35px; }
.notif { margin-left: 29px; }

/* Browser window */
.window {
  flex: none; margin: 2px 0 0 10px; height: 1418px; overflow: hidden;
  border-radius: 10px 10px 10px 6px; background: #f2f2f2; display: flex; flex-direction: column;
}
.tabstrip {
  flex: none; height: 74px; display: flex; align-items: flex-end; border-bottom: 2px solid #a2a2a2;
  background: linear-gradient(90deg, #cfd1d2 0, #d4d2cf 5%, #dad9d6 20%, #d9d8d5 60%, #d6d5d3 88%, #c6c7ca 94%, #cfced3 100%);
}
.lights { display: flex; gap: 16px; padding-left: 24px; width: 145px; margin-bottom: 22px; flex: none; }
.lights i { width: 24px; height: 24px; border-radius: 50%; border: 1px solid #0002; }
.red { background: #fc605c; }
.amber { background: #fdbc40; }
.green { background: #34c84a; }
.tabs { display: flex; flex: none; margin-bottom: -1px; }
.tab { flex: none; width: 193.500px; height: 57px; margin-right: -27.100px; display: flex; align-items: center; padding-left: 31px; position: relative; font-size: 23.800px; color: #111; }
.tab.active { z-index: 1; margin-bottom: -1px; height: 58px; }
.shape { position: absolute; left: 0; top: 0; width: 194px; height: 58px; }
.fav { width: 32px; height: 32px; position: relative; }
.tab span { position: relative; margin-left: 11px; width: 68px; white-space: nowrap; line-height: 32px; padding-top: 1px; -webkit-mask-image: linear-gradient(90deg, #000 62%, #0002 88%); mask-image: linear-gradient(90deg, #000 62%, #0002 88%); }
.tab .x { width: 16px; height: 16px; margin-left: 1px; margin-top: 1px; position: relative; }
.newtab { margin: 0 0 9px 21px; }
.profile { font-size: 23.700px; margin: 0 23px 16px auto; line-height: 32px; color: #111; }

.toolbar { flex: none; height: 71px; display: flex; align-items: center; padding-top: 1px; }
.nav { width: 205px; height: 32px; margin-left: 22px; }
.url { width: 2012px; height: 54px; margin-left: 14px; background: #fff; border: 2px solid #b8b8b8; border-radius: 7px; display: flex; align-items: center; padding-left: 12px; flex: none; }
.url p { margin: 1px 0 0 10px; font-size: 27.320px; color: #000; line-height: 40px; }
.url p span { color: #808080; }
.cookie { margin-left: auto; margin-right: 19px; }
.star { margin-right: 13px; }
.ext { width: 260px; height: 32px; margin-left: 23px; }

.bookmarks { flex: none; height: 49px; border-bottom: 2px solid #ababab; display: flex; align-items: flex-start; padding: 3px 19px 0 26px; font-size: 24.450px; color: #000; white-space: nowrap; }
.bm { display: flex; align-items: center; gap: 8px; height: 34px; margin-right: 26px; flex: none; }
.bm.apps { gap: 9px; }
.fo { width: 32px; height: 26px; }
.dc { width: 17px; height: 25px; }
.ebox { width: 290px; }
.topic { gap: 16px; width: 273px; }
.thermo { width: 291px; }
.consult { gap: 16px; }
.more { margin-left: auto; font-size: 32px; line-height: 30px; color: #666; }

/* WordPress admin bar */
.adminbar { flex: none; height: 64px; background: #23282d; display: flex; align-items: center; color: #eee; fill: #a0a5aa; font-size: 25.800px; padding: 0 21px 0 14px; white-space: nowrap; }
.wp { width: 40px; height: 40px; }
.sites { width: 39px; height: 32px; margin-left: 30px; }
.t1 { margin-left: 13px; width: 150px; letter-spacing: .15px; }
.house { width: 30px; height: 32px; }
.t2 { margin-left: 16px; width: 249px; }
.sync { width: 36px; height: 28px; }
.t3 { margin-left: 15px; width: 62px; }
.comment { width: 27px; height: 32px; }
.t4 { margin-left: 19px; width: 55px; color: #a0a5aa; }
.add { width: 26px; height: 26px; }
.t5 { margin-left: 17px; }
.hola { margin-left: auto; }
.user { width: 30px; height: 32px; margin-left: 17px; }

/* Page */
.page { flex: 1; display: flex; position: relative; overflow: hidden; min-height: 0; }
.page::after { content: ""; position: absolute; left: 320px; right: 60px; bottom: 0; height: 110px; background: linear-gradient(transparent, #0001 100%); }
.sidebar { width: 320px; flex: none; background: #23282d; color: #eee; fill: #a0a5aa; font-size: 28px; height: 1160px; overflow: hidden; }
.item { height: 68px; display: flex; align-items: center; }
.item svg { width: 38px; height: 38px; margin: 0 17px 0 17px; }
.item svg.db { width: 40px; height: 40px; margin: 4px 16px 0; }
.item svg.mail { width: 32px; height: 26px; margin: 0 20px; }
.item svg.wide { width: 44px; height: 32px; margin: 0 14px; }
.item svg.pie { width: 30px; height: 30px; margin: 0 22px 0 20px; }
.item svg.top { width: 34px; height: 34px; margin: 0 20px 0 18px; }
.item.two { height: 104px; margin-top: -44px; line-height: 36px; align-items: flex-start; padding-top: 16px; }
.item.two svg.top { margin-top: 2px; }
.item.current { background: #0073aa; color: #fff; position: relative; }
.item.current svg { width: 32px; height: 34px; margin: 0 20px; }
.item.current::after { content: ""; position: absolute; right: 0; top: 18px; border: 16px solid transparent; border-left: 0; border-right-color: #f1f1f1; }
.sub { margin: 0; padding: 14px 0 0 24px; list-style: none; height: 600px; background: #32373c; color: #b4b9be; font-size: 25.950px; line-height: 30px; }
.sub li { padding: 12px 0; }
.sub .on { color: #fff; font-weight: 700; }

.main { flex: 1; background: #f1f1f1; padding-left: 44px; }
.sheet { width: 2144px; height: 1128px; background: #fff; padding-left: 20px; }
.frame { width: 2104px; height: 1108px; border: 2px solid #a6a6a6; border-top: 0; border-radius: 0 0 7px 7px; display: flex; gap: 30px; padding-left: 86px; align-items: flex-start; font-family: "DejaVu Sans", sans-serif; color: #222; overflow: hidden; }
.panel { border: 2px solid #eee; border-top: 0; border-radius: 0 0 9px 9px; flex: none; }
.links { width: 1194px; height: 580px; padding-left: 22px; }
.grid { display: grid; grid-template-columns: repeat(3, 382px); gap: 20px 10px; grid-auto-rows: 52px; margin-top: -18px; }
.grid label { border: 2px solid #eee; display: flex; align-items: center; padding-left: 8px; font-size: 28.600px; line-height: 30px; padding-top: 1px; }
.grid i { width: 32px; height: 32px; margin: -1px 16px 0 0; border-radius: 8px; border: 2px solid #ccc; background: linear-gradient(#ececec, #dedede); flex: none; }
.mid { grid-column: 2; }
.actions { display: flex; gap: 8px; margin: 60px 0 0 -12px; }
.btn { font-size: 26px; font-family: "DejaVu Sans", sans-serif; width: 320px; height: 58px; border: 2px solid #ccc; border-bottom-width: 4px; border-radius: 6px; background: #f7f7f7; color: #555; padding: 2px 0 0; white-space: nowrap; display: block; }
.primary { background: #0085ba; border-color: #0073aa #006799 #006799; color: #fff; text-shadow: 0 -2px 2px #006799, 2px 0 2px #006799, 0 2px 2px #006799, -2px 0 2px #006799; }
.save { width: 230px; }
.new { width: 222px; margin-top: 29px; }
.side { width: 614px; height: 1050px; padding: 8px 0 0 20px; }
.side p { margin: 0; font-size: 26.080px; line-height: 38.140px; white-space: nowrap; }
.widgets { margin: 66px 0 0 8px; display: flex; flex-direction: column; gap: 10px; width: 576px; }
.widget { height: 84px; border: 2px solid #eee; border-radius: 9px; background: #fff; overflow: hidden; }
.widget h3 { margin: 0; height: 60px; background: #f4f4f4; display: flex; align-items: flex-start; padding: 0 16px 0 9px; font-weight: 400; font-size: 28.700px; color: #333; fill: #333; }
.widget h3 > svg:first-child { height: 59px; overflow: visible; }
.widget h3 span { margin: 20px 0 0 20px; line-height: 36px; white-space: nowrap; }
.widget .plus { width: 29px; height: 33px; margin: 7px 0 0 auto; }

.linkstatus { position: absolute; z-index: 2; left: 0; bottom: 0; width: 944px; height: 36px; border: 2px solid #b0b0b0; border-width: 3px 2px 2px 2px; border-radius: 0 6px 0 8px; background: linear-gradient(#ededed, #e2e2e2); font-size: 22.150px; line-height: 31px; padding-left: 7px; color: #000; white-space: nowrap; }

/* Dock */
.dock {
  flex: none; width: 2380px; height: 134px; margin: 2px 0 0 90px; padding-left: 7px; display: flex; border-radius: 10px 10px 0 0;
  background: linear-gradient(90deg, #62676b 0, #596c68 8%, #5e6f66 20%, #6f7862 33%, #72725f 42%, #6f6c69 48%, #697068 56%, #6a756a 64%, #5f6e6c 72%, #6d6b6a 82%, #686a6b 90%, #63666b 100%);
}
.app { width: 110.300px; height: 134px; position: relative; }
.run { background: radial-gradient(circle 4.500px at 55px 126px, #000 92%, transparent); }
.divider { width: 2px; height: 98px; margin: 18px 23px 0 24px; background: #42474a; flex: none; }
```
